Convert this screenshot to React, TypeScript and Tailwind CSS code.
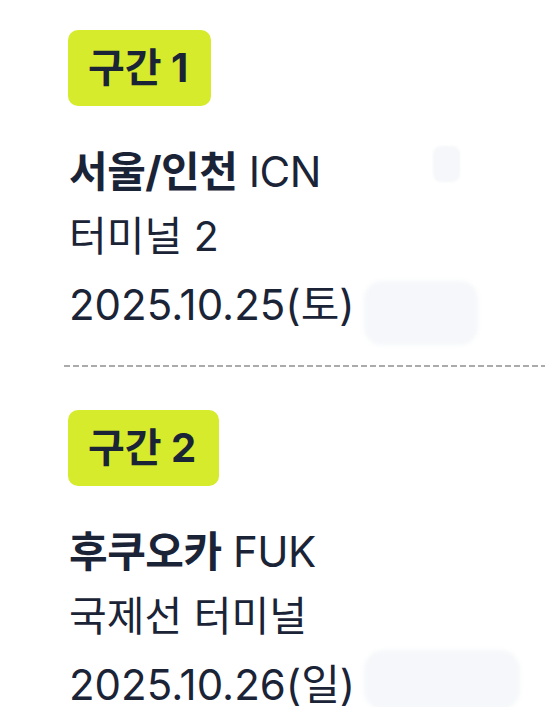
import React from 'react';

interface Segment {
  label: string;
  city: string;
  code: string;
  terminal: string;
  date: string;
}

const segments: Segment[] = [
  { label: '구간 1', city: '서울/인천', code: 'ICN', terminal: '터미널 2', date: '2025.10.25(토)' },
  { label: '구간 2', city: '후쿠오카', code: 'FUK', terminal: '국제선 터미널', date: '2025.10.26(일)' },
];

const SegmentBlock: React.FC<{ segment: Segment }> = ({ segment }) => (
  <div className="pl-[68px]">
    <div className="inline-flex h-[76px] items-center rounded-[10px] bg-[#d5eb2c] pl-[20px] pr-[23px] text-[40px] font-bold text-[#1b2437]">
      {segment.label}
    </div>
    <div className="mt-[34px] pl-[1px] text-[#1b2437]">
      <div className="text-[42px] leading-[64px] tracking-[-0.5px]">
        <span className="font-bold">{segment.city}</span> <span>{segment.code}</span>
      </div>
      <div className="text-[41px] leading-[64px]">{segment.terminal}</div>
      <div className="mt-[2px] text-[42px] leading-[70px]">{segment.date}</div>
    </div>
  </div>
);

export default function App() {
  return (
    <div className="relative h-[707px] w-[545px] overflow-hidden bg-white pt-[30px] font-['Inter','Noto_Sans_CJK_KR',sans-serif]">
      <SegmentBlock segment={segments[0]} />
      <div className="ml-[64px] mt-[25px] h-[2px] bg-[repeating-linear-gradient(90deg,#ababab_0_6px,transparent_6px_9px)]" />
      <div className="mt-[43px]">
        <SegmentBlock segment={segments[1]} />
      </div>

      {/* redacted spots */}
      <div className="absolute left-[433px] top-[146px] h-[36px] w-[27px] rounded-[8px] bg-[#f5f7fa] blur-[1px]" />
      <div className="absolute left-[364px] top-[281px] h-[64px] w-[114px] rounded-[18px] bg-[#f5f7fa] blur-[2px]" />
      <div className="absolute left-[364px] top-[650px] h-[60px] w-[156px] rounded-[20px] bg-[#f5f7fa] blur-[2px]" />
    </div>
  );
}
